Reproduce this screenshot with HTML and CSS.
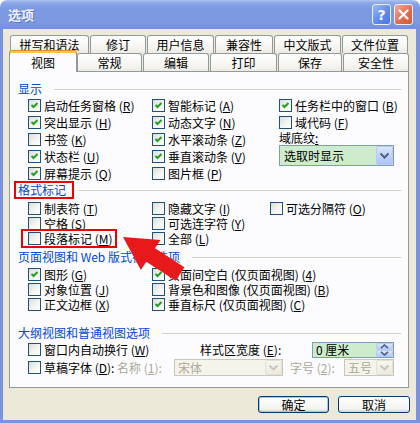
FILE: index.html
```html
<!DOCTYPE html>
<html lang="zh-CN">
<head>
    <meta charset="UTF-8">
    <title>选项</title>
    <link rel="stylesheet" href="styles.css">
</head>
<body>
<div class="window">
    <div class="titlebar">
        <span class="title">选项</span>
        <span class="tb-btn help">?</span>
        <span class="tb-btn close"><svg width="11" height="11" viewBox="0 0 11 11"><path d="M1.5 1.5 L9.5 9.5 M9.5 1.5 L1.5 9.5" stroke="#fff" stroke-width="2.2" stroke-linecap="round"/></svg></span>
    </div>
    <div class="client">
        <div class="tab-row back">
            <div class="tab t-spell">拼写和语法</div>
            <div class="tab t-track">修订</div>
            <div class="tab t-user">用户信息</div>
            <div class="tab t-compat">兼容性</div>
            <div class="tab t-asian">中文版式</div>
            <div class="tab t-files">文件位置</div>
        </div>
        <div class="tab-row front">
            <div class="tab sel t-view">视图</div>
            <div class="tab t-general">常规</div>
            <div class="tab t-edit">编辑</div>
            <div class="tab t-print">打印</div>
            <div class="tab t-save">保存</div>
            <div class="tab t-security">安全性</div>
        </div>
        <div class="panel">
            <div class="group-head"><span>显示</span></div>
            <div class="cols show">
                <div class="col c1">
                    <div class="chk"><span class="box on"><svg width="11" height="11" viewBox="0 0 11 11"><path d="M2.5 5 L4.5 7 L8.5 3" stroke="#21a121" stroke-width="2" fill="none"/></svg></span>启动任务窗格 (<u>R</u>)</div>
                    <div class="chk"><span class="box on"><svg width="11" height="11" viewBox="0 0 11 11"><path d="M2.5 5 L4.5 7 L8.5 3" stroke="#21a121" stroke-width="2" fill="none"/></svg></span>突出显示 (<u>H</u>)</div>
                    <div class="chk"><span class="box"></span>书签 (<u>K</u>)</div>
                    <div class="chk"><span class="box on"><svg width="11" height="11" viewBox="0 0 11 11"><path d="M2.5 5 L4.5 7 L8.5 3" stroke="#21a121" stroke-width="2" fill="none"/></svg></span>状态栏 (<u>U</u>)</div>
                    <div class="chk"><span class="box on"><svg width="11" height="11" viewBox="0 0 11 11"><path d="M2.5 5 L4.5 7 L8.5 3" stroke="#21a121" stroke-width="2" fill="none"/></svg></span>屏幕提示 (<u>Q</u>)</div>
                </div>
                <div class="col c2">
                    <div class="chk"><span class="box on"><svg width="11" height="11" viewBox="0 0 11 11"><path d="M2.5 5 L4.5 7 L8.5 3" stroke="#21a121" stroke-width="2" fill="none"/></svg></span>智能标记 (<u>A</u>)</div>
                    <div class="chk"><span class="box on"><svg width="11" height="11" viewBox="0 0 11 11"><path d="M2.5 5 L4.5 7 L8.5 3" stroke="#21a121" stroke-width="2" fill="none"/></svg></span>动态文字 (<u>N</u>)</div>
                    <div class="chk"><span class="box on"><svg width="11" height="11" viewBox="0 0 11 11"><path d="M2.5 5 L4.5 7 L8.5 3" stroke="#21a121" stroke-width="2" fill="none"/></svg></span>水平滚动条 (<u>Z</u>)</div>
                    <div class="chk"><span class="box on"><svg width="11" height="11" viewBox="0 0 11 11"><path d="M2.5 5 L4.5 7 L8.5 3" stroke="#21a121" stroke-width="2" fill="none"/></svg></span>垂直滚动条 (<u>V</u>)</div>
                    <div class="chk"><span class="box"></span>图片框 (<u>P</u>)</div>
                </div>
                <div class="col c3">
                    <div class="chk"><span class="box on"><svg width="11" height="11" viewBox="0 0 11 11"><path d="M2.5 5 L4.5 7 L8.5 3" stroke="#21a121" stroke-width="2" fill="none"/></svg></span>任务栏中的窗口 (<u>B</u>)</div>
                    <div class="chk"><span class="box"></span>域代码 (<u>F</u>)</div>
                    <div class="field-label">域底纹<u>:</u></div>
                    <div class="combo">
                        <span class="val">选取时显示</span>
                        <span class="dd"><svg width="11" height="8" viewBox="0 0 11 8"><path d="M1.5 1.5 L5.5 5.5 L9.5 1.5" stroke="#4d6185" stroke-width="2" fill="none"/></svg></span>
                    </div>
                </div>
            </div>

            <div class="group-head fmt"><span class="marked">格式标记</span></div>
            <div class="cols compact marks">
                <div class="col c1">
                    <div class="chk"><span class="box"></span>制表符 (<u>T</u>)</div>
                    <div class="chk"><span class="box"></span>空格 (<u>S</u>)</div>
                    <div class="chk marked"><span class="box"></span>段落标记 (<u>M</u>)</div>
                </div>
                <div class="col c2">
                    <div class="chk"><span class="box"></span>隐藏文字 (<u>I</u>)</div>
                    <div class="chk"><span class="box"></span>可选连字符 (<u>Y</u>)</div>
                    <div class="chk"><span class="box"></span>全部 (<u>L</u>)</div>
                </div>
                <div class="col c3">
                    <div class="chk"><span class="box"></span>可选分隔符 (<u>O</u>)</div>
                </div>
            </div>

            <div class="group-head page"><span>页面视图和 Web 版式视图选项</span></div>
            <div class="cols compact pages">
                <div class="col c1">
                    <div class="chk"><span class="box on"><svg width="11" height="11" viewBox="0 0 11 11"><path d="M2.5 5 L4.5 7 L8.5 3" stroke="#21a121" stroke-width="2" fill="none"/></svg></span>图形 (<u>G</u>)</div>
                    <div class="chk"><span class="box"></span>对象位置 (<u>J</u>)</div>
                    <div class="chk"><span class="box"></span>正文边框 (<u>X</u>)</div>
                </div>
                <div class="col c2">
                    <div class="chk"><span class="box on"><svg width="11" height="11" viewBox="0 0 11 11"><path d="M2.5 5 L4.5 7 L8.5 3" stroke="#21a121" stroke-width="2" fill="none"/></svg></span>页面间空白 (仅页面视图) (<u>4</u>)</div>
                    <div class="chk"><span class="box"></span>背景色和图像 (仅页面视图) (<u>B</u>)</div>
                    <div class="chk"><span class="box on"><svg width="11" height="11" viewBox="0 0 11 11"><path d="M2.5 5 L4.5 7 L8.5 3" stroke="#21a121" stroke-width="2" fill="none"/></svg></span>垂直标尺 (仅页面视图) (<u>C</u>)</div>
                </div>
            </div>

            <div class="group-head outline"><span>大纲视图和普通视图选项</span></div>
            <div class="outline-rows">
                <div class="row-wrap">
                    <div class="chk"><span class="box"></span>窗口内自动换行 (<u>W</u>)</div>
                    <div class="inline-label">样式区宽度 (<u>E</u>):</div>
                    <div class="spin">
                        <span class="val">0 厘米</span>
                        <span class="spin-btns">
                            <span class="sb"><svg width="9" height="5" viewBox="0 0 9 5"><path d="M1 4.2 L4.5 1 L8 4.2" stroke="#4d6185" stroke-width="1.6" fill="none"/></svg></span>
                            <span class="sb"><svg width="9" height="5" viewBox="0 0 9 5"><path d="M1 0.8 L4.5 4 L8 0.8" stroke="#4d6185" stroke-width="1.6" fill="none"/></svg></span>
                        </span>
                    </div>
                </div>
                <div class="row-draft">
                    <div class="chk"><span class="box"></span>草稿字体 (<u>D</u>):</div>
                    <div class="dis name-label">名称 (<u>1</u>):</div>
                    <div class="combo off font-name">
                        <span class="val">宋体</span>
                        <span class="dd"><svg width="11" height="8" viewBox="0 0 11 8"><path d="M1.5 1.5 L5.5 5.5 L9.5 1.5" stroke="#c9c7ba" stroke-width="2" fill="none"/></svg></span>
                    </div>
                    <div class="dis size-label">字号 (<u>2</u>):</div>
                    <div class="combo off font-size">
                        <span class="val">五号</span>
                        <span class="dd"><svg width="11" height="8" viewBox="0 0 11 8"><path d="M1.5 1.5 L5.5 5.5 L9.5 1.5" stroke="#c9c7ba" stroke-width="2" fill="none"/></svg></span>
                    </div>
                </div>
            </div>
        </div>
        <div class="buttons">
            <div class="btn default">确定</div>
            <div class="btn cancel">取消</div>
        </div>
    </div>
    <svg class="arrow" width="420" height="423" viewBox="0 0 420 423">
        <polygon transform="translate(123 237) rotate(33)" points="0,0 33,-18 33,-8 68,-8 68,8 33,8 33,18" fill="#e8191b"/>
    </svg>
</div>
</body>
</html>
```

FILE: styles.css
```css
body {
    margin: 0;
    background: #fff;
    font-family: "Noto Sans CJK SC", "Noto Sans", sans-serif;
    font-size: 12px;
    line-height: 14px;
    color: #000;
}
.window {
    position: relative;
    width: 420px;
    height: 423px;
    overflow: hidden;
}

/* title bar */
.titlebar {
    height: 29px;
    box-sizing: border-box;
    display: flex;
    align-items: center;
    gap: 3px;
    padding: 0 7px 0 8px;
    border-radius: 7px 7px 0 0;
    background: linear-gradient(#aec3f2 0, #8ba7e9 3px, #7b98e2 9px, #7d99e2 75%, #7490dd 100%);
}
.title {
    flex: 1;
    color: #eef2fc;
    font-weight: bold;
    font-size: 13px;
    line-height: 16px;
    text-shadow: 1px 1px 0 #5b76c7;
}
.tb-btn {
    width: 19px;
    height: 21px;
    box-sizing: border-box;
    border: 1px solid #e9effc;
    border-radius: 3px;
    display: flex;
    align-items: center;
    justify-content: center;
}
.help {
    background: linear-gradient(135deg, #9cb9f6, #5f86ea 60%, #4e78e3);
    color: #fff;
    font-family: "DejaVu Sans", sans-serif;
    font-weight: bold;
    font-size: 14px;
}
.close {
    background: linear-gradient(135deg, #f1ad98, #de6a4b 60%, #d25a3c);
}

/* client area */
.client {
    height: 394px;
    box-sizing: border-box;
    background: #ece9d8;
    border: solid #7b93dc;
    border-width: 0 4px 3px 3px;
    padding-top: 6px;
}

/* tabs */
.tab-row {
    display: flex;
    height: 18px;
}
.tab-row.back { padding-left: 7px; }
.tab-row.front { padding-left: 6px; }
.tab {
    height: 18px;
    box-sizing: border-box;
    margin-right: 1px;
    border: 1px solid #919b9c;
    border-bottom: 0;
    border-radius: 3px 3px 0 0;
    background: linear-gradient(#fff, #f7f6f2 60%, #ecebe5);
    text-align: center;
    line-height: 17px;
}
.tab.sel {
    position: relative;
    z-index: 1;
    height: 22px;
    margin-top: -3px;
    margin-right: 0;
    padding-top: 2px;
    background: #fcfcfe;
    border-top: 1px solid #e68b2c;
    box-shadow: inset 0 2px 0 #ffc73c;
    line-height: 19px;
}
.t-spell { width: 79px; }
.t-track { width: 56px; }
.t-user { width: 67px; }
.t-compat { width: 58px; }
.t-asian { width: 67px; }
.t-files { width: 66px; margin-right: 0; }
.t-view { width: 68px; }
.t-general { width: 65px; }
.t-edit { width: 66px; }
.t-print { width: 67px; }
.t-save { width: 64px; }
.t-security { width: 66px; margin-right: 0; }

/* panel */
.panel {
    width: 400px;
    height: 317px;
    box-sizing: border-box;
    margin-left: 6px;
    border: 1px solid #919b9c;
    background: #fcfcfe;
    padding: 9px 7px 0 8px;
}
.group-head {
    display: flex;
    align-items: center;
    height: 16px;
    line-height: 16px;
    color: #0046d5;
    white-space: nowrap;
}
.group-head::after {
    content: "";
    flex: 1;
    height: 1px;
    margin-left: 12px;
    background: #d3d2c4;
}
.group-head.fmt { margin-bottom: 3px; }
.group-head.page { margin-top: 3px; margin-bottom: 2px; }
.group-head.outline { margin-top: 13px; }

.marked { position: relative; }
.group-head .marked::after {
    content: "";
    position: absolute;
    left: -4px;
    right: -8px;
    top: -1px;
    bottom: -1px;
    border: 2px solid #e00;
}
.chk.marked { align-self: flex-start; }
.chk.marked::after {
    content: "";
    position: absolute;
    left: -7px;
    right: -4px;
    top: -2px;
    bottom: -2px;
    border: 2px solid #e00;
}

.cols {
    display: flex;
    padding-left: 10px;
}
.col {
    display: flex;
    flex-direction: column;
}
.cols .c1 { width: 124px; }
.show .c2 { width: 127px; }
.marks .c2 { width: 118px; }

.chk {
    display: flex;
    align-items: center;
    height: 17px;
    line-height: 14px;
    white-space: nowrap;
}
.compact .chk { height: 15px; }
.box {
    flex: none;
    width: 13px;
    height: 13px;
    box-sizing: border-box;
    margin-right: 3px;
    border: 1px solid #1c5180;
    background: linear-gradient(135deg, #dcdcd7, #f4f4f1 55%, #fff);
    display: flex;
    align-items: center;
    justify-content: center;
}

.field-label {
    height: 14px;
    line-height: 14px;
}
.combo {
    display: flex;
    align-items: center;
    width: 115px;
    height: 21px;
    box-sizing: border-box;
    border: 1px solid #7f9db9;
    background: #cdeccb;
    padding-left: 4px;
}
.combo .val { flex: 1; white-space: nowrap; }
.dd {
    width: 17px;
    height: 19px;
    box-sizing: border-box;
    border: 1px solid #b9cbf3;
    border-radius: 2px;
    background: linear-gradient(#dbe5fb, #bccff9 60%, #adc3f6);
    display: flex;
    align-items: center;
    justify-content: center;
}

/* outline section */
.outline-rows { padding-left: 10px; }
.row-wrap {
    display: grid;
    grid-template-columns: 172px 112px 82px;
    align-items: center;
    height: 17px;
}
.spin {
    display: flex;
    align-items: center;
    height: 16px;
    box-sizing: border-box;
    border: 1px solid #7f9db9;
    background: #cdeccb;
    padding-left: 3px;
}
.spin .val { flex: 1; white-space: nowrap; }
.spin-btns {
    width: 17px;
    height: 14px;
    display: flex;
    flex-direction: column;
}
.sb {
    flex: 1;
    border: 1px solid #b9cbf3;
    border-radius: 2px;
    background: linear-gradient(#dbe5fb, #b4c9f7);
    display: flex;
    align-items: center;
    justify-content: center;
}
.row-draft {
    display: flex;
    align-items: center;
    height: 19px;
}
.row-draft .chk { width: 89px; height: 19px; }
.dis { color: #aca899; white-space: nowrap; }
.name-label { width: 57px; }
.size-label { width: 54px; padding-left: 7px; }
.combo.off {
    height: 17px;
    border-color: #c9c7ba;
    background: #f5f4ea;
    color: #aca899;
    padding-left: 3px;
}
.combo.off .dd {
    height: 15px;
    border-color: #e3e1d7;
    background: linear-gradient(#f7f6f1, #ebe9e0);
}
.font-name { width: 109px; }
.font-size { width: 50px; }

/* buttons */
.buttons {
    display: flex;
    justify-content: flex-end;
    gap: 9px;
    margin-top: 8px;
    padding-right: 6px;
}
.btn {
    width: 71px;
    height: 17px;
    box-sizing: border-box;
    border: 1px solid #003c74;
    border-radius: 3px;
    background: linear-gradient(#fff, #f3f3ef 80%, #d8d3c8);
    text-align: center;
    line-height: 15px;
}
.btn.default { box-shadow: inset 0 0 0 1px #a9c4ef; }
.btn.cancel { width: 72px; }

.arrow {
    position: absolute;
    left: 0;
    top: 0;
    pointer-events: none;
}
```
